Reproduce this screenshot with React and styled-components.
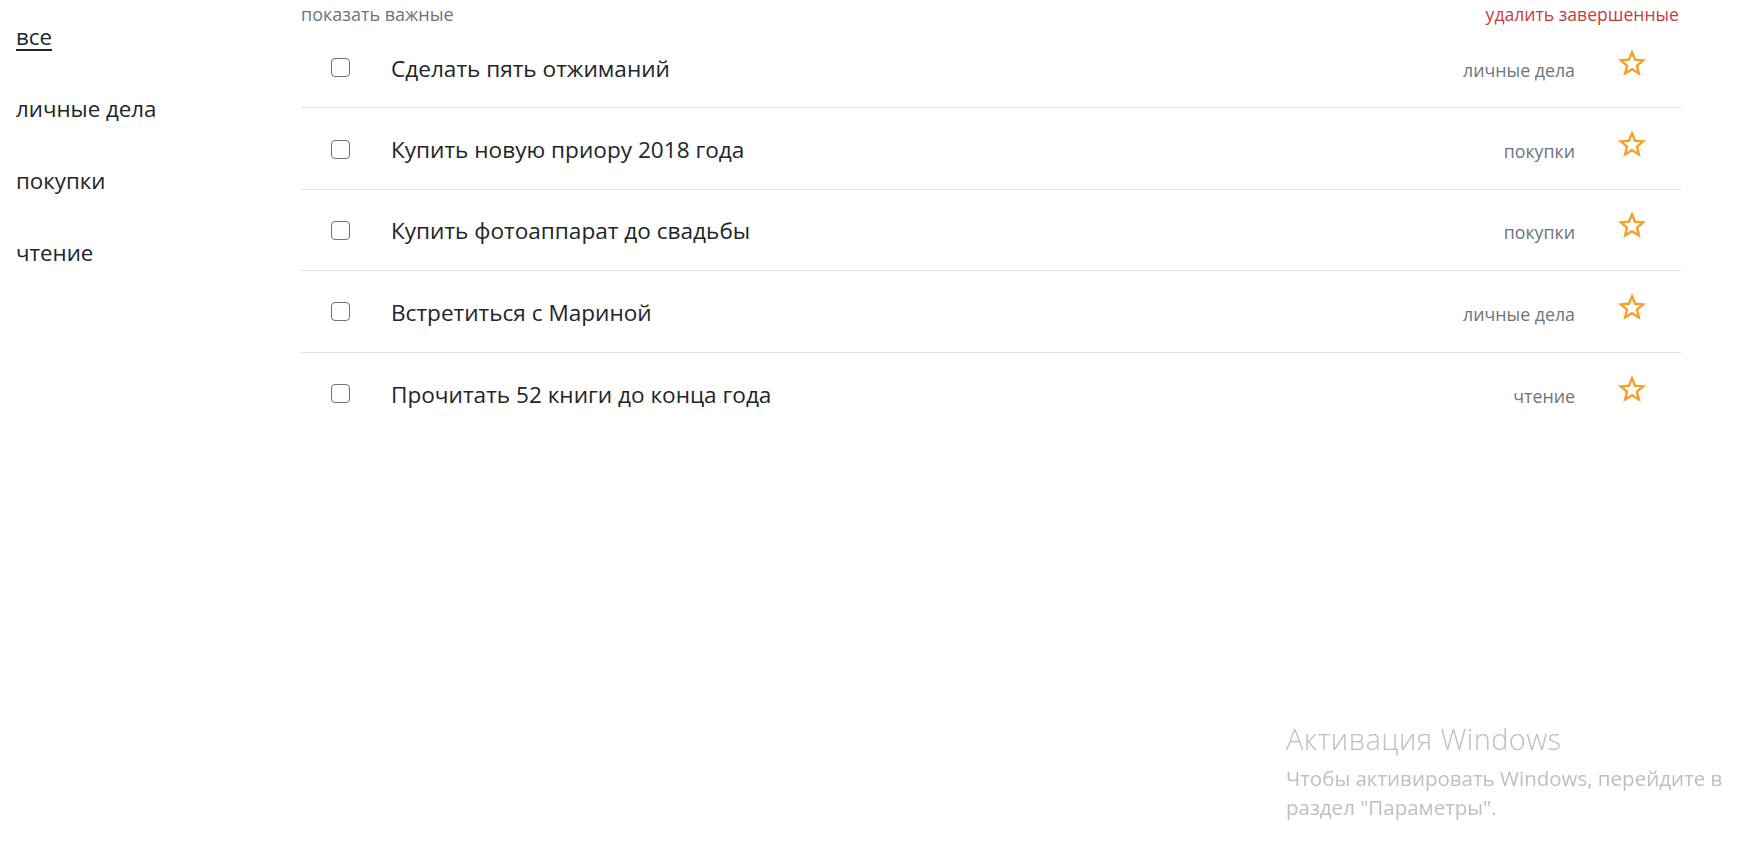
import React from "react";
import styled, { createGlobalStyle } from "styled-components";

const GlobalStyle = createGlobalStyle`
  html, body {
    margin: 0;
    padding: 0;
    background: #ffffff;
    font-family: "Open Sans", "Noto Sans", "Liberation Sans", sans-serif;
    color: #212529;
  }
`;

const Layout = styled.div`
  display: grid;
  grid-template-columns: 301px 1380px;
  align-items: start;
  min-height: 858px;
`;

const Sidebar = styled.nav`
  display: flex;
  flex-direction: column;
  padding: 1px 0 0 16px;
`;

const SideLink = styled.a`
  display: block;
  padding: 21px 0;
  font-size: 22.3px;
  line-height: 30px;
  color: #212529;
  text-decoration: ${(p) => (p.$active ? "underline" : "none")};
  text-decoration-thickness: 2px;
  text-underline-offset: 4px;
  cursor: pointer;
`;

const Main = styled.main`
  display: flex;
  flex-direction: column;
`;

const Toolbar = styled.div`
  display: flex;
  justify-content: space-between;
  align-items: center;
  height: 27px;
  line-height: 27px;
  padding-right: 2px;
`;

const ToolLink = styled.a`
  padding-top: 2px;
  font-size: ${(p) => (p.$danger ? "17.6px" : "18px")};
  color: ${(p) => (p.$danger ? "#c63c3e" : "#6c757d")};
  cursor: pointer;
`;

const List = styled.ul`
  list-style: none;
  margin: 0;
  padding: 0;
`;

const Row = styled.li`
  display: flex;
  align-items: center;
  box-sizing: border-box;
  height: 81.4px;
  padding: 3px 33px 0 30px;
  border-bottom: 1px solid #dee2e6;
  &:last-child {
    border-bottom: none;
  }
`;

const Check = styled.input.attrs({ type: "checkbox" })`
  appearance: none;
  -webkit-appearance: none;
  margin: 0 0 2px;
  width: 19px;
  height: 19px;
  flex: none;
  box-sizing: border-box;
  border: 1px solid #707070;
  border-radius: 4px;
  background: #fff;
  cursor: pointer;
`;

const Title = styled.span`
  flex: 1;
  margin-left: 41px;
  font-size: 22.6px;
  line-height: 30px;
  color: #212529;
`;

const Category = styled.span`
  font-size: 17.8px;
  line-height: 30px;
  color: #6c757d;
  text-align: right;
  padding-top: 2px;
`;

const StarButton = styled.span`
  display: flex;
  margin-left: 41px;
  margin-bottom: 12px;
  width: 32px;
  height: 30px;
  cursor: pointer;
`;

const Watermark = styled.div`
  position: fixed;
  left: 1286px;
  top: 720px;
  color: #bfbfbf;
  font-family: "Open Sans", "Noto Sans", sans-serif;
  pointer-events: none;
`;

const WmTitle = styled.div`
  font-size: 29px;
  font-weight: 300;
  letter-spacing: 0.4px;
  line-height: 38px;
`;

const WmBody = styled.div`
  margin-top: 6px;
`;

const WmLine = styled.div`
  font-size: 20.5px;
  line-height: 28.5px;
`;

const Star = () => (
  <svg width="32" height="30" viewBox="0 0 32 30" style={{ overflow: "visible" }}>
    <polygon
      points="16,4.3 19.1,11.74 27.13,12.38 21.01,17.63 22.88,25.47 16,21.27 9.12,25.47 10.99,17.63 4.87,12.38 12.9,11.74"
      fill="none"
      stroke="#f4a127"
      strokeWidth="2.4"
      strokeLinejoin="miter"
    />
  </svg>
);

const categories = ["все", "личные дела", "покупки", "чтение"];

const todos = [
  { title: "Сделать пять отжиманий", category: "личные дела" },
  { title: "Купить новую приору 2018 года", category: "покупки" },
  { title: "Купить фотоаппарат до свадьбы", category: "покупки" },
  { title: "Встретиться с Мариной", category: "личные дела" },
  { title: "Прочитать 52 книги до конца года", category: "чтение" },
];

export default function App() {
  return (
    <>
      <GlobalStyle />
      <Layout>
        <Sidebar>
          {categories.map((c, i) => (
            <SideLink key={c} $active={i === 0}>
              {c}
            </SideLink>
          ))}
        </Sidebar>
        <Main>
          <Toolbar>
            <ToolLink>показать важные</ToolLink>
            <ToolLink $danger>удалить завершенные</ToolLink>
          </Toolbar>
          <List>
            {todos.map((t) => (
              <Row key={t.title}>
                <Check />
                <Title>{t.title}</Title>
                <Category>{t.category}</Category>
                <StarButton>
                  <Star />
                </StarButton>
              </Row>
            ))}
          </List>
        </Main>
      </Layout>
      <Watermark>
        <WmTitle>Активация Windows</WmTitle>
        <WmBody>
          <WmLine>Чтобы активировать Windows, перейдите в</WmLine>
          <WmLine>раздел "Параметры".</WmLine>
        </WmBody>
      </Watermark>
    </>
  );
}
